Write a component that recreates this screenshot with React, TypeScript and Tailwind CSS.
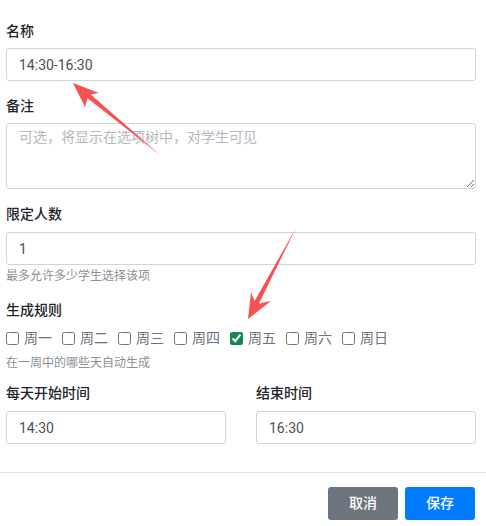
import React from "react";

const days = ["周一", "周二", "周三", "周四", "周五", "周六", "周日"];

const font = { fontFamily: 'Roboto, "Noto Sans CJK SC", sans-serif' };

export default function App() {
  return (
    <div
      className="relative w-[486px] h-[526px] bg-white overflow-hidden text-[14px] text-[#212529]"
      style={font}
    >
      <div className="pl-[6px] pr-[10px] pt-[21px]">
        <div className="leading-[21px] font-medium mb-[6px]">名称</div>
        <input
          readOnly
          value="14:30-16:30"
          className="block w-full h-[33px] border border-[#ced4da] rounded-[3px] px-[12px] text-[14px] text-[#495057] outline-none"
        />

        <div className="leading-[21px] font-medium mt-[15px] mb-[6px]">备注</div>
        <textarea
          readOnly
          placeholder="可选，将显示在选项树中，对学生可见"
          className="block w-full h-[66px] border border-[#ced4da] rounded-[3px] px-[12px] pt-[3px] leading-[21px] text-[14px] text-[#495057] placeholder:text-[#b4b8bc] outline-none"
        />

        <div className="leading-[21px] font-medium mt-[15px] mb-[7px]">限定人数</div>
        <input
          readOnly
          value="1"
          className="block w-full h-[33px] border border-[#ced4da] rounded-[3px] px-[12px] text-[14px] text-[#495057] outline-none"
        />
        <div className="mt-[2px] text-[12px] leading-[18px] text-[#8a9096]">最多允许多少学生选择该项</div>

        <div className="leading-[21px] font-medium mt-[15px]">生成规则</div>
        <div className="mt-[7px] flex items-center gap-[10px] h-[21px]">
          {days.map((d, i) => (
            <label key={d} className="flex items-center gap-[5px]">
              <input
                type="checkbox"
                readOnly
                checked={i === 4}
                className="m-0 w-[13px] h-[13px] accent-[#198754]"
              />
              <span className="text-[14px] leading-[21px] text-[#6b7280]">{d}</span>
            </label>
          ))}
        </div>
        <div className="mt-[5px] text-[12px] leading-[18px] text-[#8a9096]">在一周中的哪些天自动生成</div>

        <div className="mt-[11px] grid grid-cols-2 gap-[30px]">
          <div>
            <div className="leading-[21px] font-medium mb-[7px]">每天开始时间</div>
            <input
              readOnly
              value="14:30"
              className="block w-full h-[33px] border border-[#ced4da] rounded-[3px] px-[12px] text-[14px] text-[#495057] outline-none"
            />
          </div>
          <div>
            <div className="leading-[21px] font-medium mb-[7px]">结束时间</div>
            <input
              readOnly
              value="16:30"
              className="block w-full h-[33px] border border-[#ced4da] rounded-[3px] px-[12px] text-[14px] text-[#495057] outline-none"
            />
          </div>
        </div>
      </div>

      <div className="mt-[28px] border-t border-[#dee2e6]" />

      <div className="flex justify-end gap-[7px] pt-[14px] pr-[11px]">
        <button className="w-[70px] h-[33px] rounded-[3px] bg-[#6c757d] text-white text-[14px] font-medium">
          取消
        </button>
        <button className="w-[70px] h-[33px] rounded-[3px] bg-[#007bff] text-white text-[14px] font-medium">
          保存
        </button>
      </div>

      <svg
        className="absolute inset-0 pointer-events-none"
        width="486"
        height="526"
        viewBox="0 0 486 526"
      >
        <polygon
          points="160.5,155.5 87.6,98.3 85,107 73,83 99,93 90.8,94.5"
          fill="#f75252"
        />
        <polygon
          points="296.5,227 254.6,301 251,292 248,319 271,301 259,303.4"
          fill="#f75252"
        />
      </svg>
    </div>
  );
}
